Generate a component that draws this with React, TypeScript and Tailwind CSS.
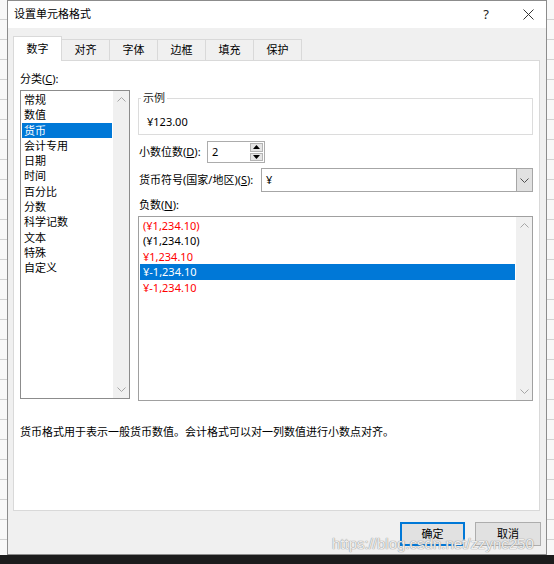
import React from "react";

const categories = ["常规", "数值", "货币", "会计专用", "日期", "时间", "百分比", "分数", "科学记数", "文本", "特殊", "自定义"];

const negatives = [
    { text: "(¥1,234.10)", red: true },
    { text: "(¥1,234.10)", red: false },
    { text: "¥1,234.10", red: true },
    { text: "¥-1,234.10", red: false, selected: true },
    { text: "¥-1,234.10", red: true },
];

const tabs = ["数字", "对齐", "字体", "边框", "填充", "保护"];

const Chevron = ({ dir, color = "#a6a6a6" }: { dir: "up" | "down"; color?: string }) => (
    <svg width="9" height="5" viewBox="0 0 9 5" fill="none">
        <path
            d={dir === "up" ? "M0.5 4.5 L4.5 0.5 L8.5 4.5" : "M0.5 0.5 L4.5 4.5 L8.5 0.5"}
            stroke={color}
            strokeWidth="1"
        />
    </svg>
);

const Triangle = ({ dir }: { dir: "up" | "down" }) => (
    <svg width="7" height="4" viewBox="0 0 7 4">
        <path d={dir === "up" ? "M0 4 L3.5 0 L7 4 Z" : "M0 0 L3.5 4 L7 0 Z"} fill="#000" />
    </svg>
);

const ScrollBar = () => (
    <div className="w-[16px] shrink-0 bg-[#f0f0f0] flex flex-col justify-between">
        <div className="h-[17px] flex items-center justify-center">
            <Chevron dir="up" />
        </div>
        <div className="h-[17px] flex items-center justify-center">
            <Chevron dir="down" />
        </div>
    </div>
);

const Key = ({ k }: { k: string }) => <span className="underline underline-offset-[1px]">{k}</span>;

// excel grid peeking out on both sides of the dialog
const Strip = () => (
    <div className="w-[7px] shrink-0 bg-[#f8f8f8] flex flex-col overflow-hidden">
        {Array.from({ length: 28 }).map((_, i) => (
            <div key={i} className="h-[20px] shrink-0 border-b border-[#d2d2d2]" />
        ))}
    </div>
);

const Dialog = () => {
    return (
        <div className="w-[540px] h-[555px] shrink-0 border border-[#8c8c8c] bg-[#f0f0f0] flex flex-col">
            {/* title bar */}
            <div className="h-[27px] bg-white flex items-center pl-[6px]">
                <div className="flex-1 text-[11px] text-black">设置单元格格式</div>
                <div className="w-[48px] text-center text-[13px] text-[#222]">?</div>
                <div className="w-[36px] flex justify-center">
                    <svg width="11" height="11" viewBox="0 0 11 11">
                        <path d="M0.5 0.5 L10.5 10.5 M10.5 0.5 L0.5 10.5" stroke="#333" strokeWidth="1" />
                    </svg>
                </div>
            </div>

            <div className="pt-[8px] pl-[5px] pr-[6px] flex flex-col">
                {/* tabs */}
                <div className="flex items-end h-[25px] -mb-px">
                    {tabs.map((t, i) =>
                        i === 0 ? (
                            <div
                                key={t}
                                className="relative z-10 w-[49px] h-[25px] bg-white border border-b-0 border-[#d9d9d9] flex items-center justify-center text-[11px]"
                            >
                                {t}
                            </div>
                        ) : (
                            <div
                                key={t}
                                className="w-[48px] h-[22px] bg-[#f0f0f0] border border-l-0 border-[#d9d9d9] flex items-center justify-center text-[11px]"
                            >
                                {t}
                            </div>
                        )
                    )}
                </div>

                {/* tab panel */}
                <div className="h-[451px] bg-white border border-[#d9d9d9] pt-[10px] pl-[6px] flex flex-col text-[11px] text-black">
                    <div className="flex">
                        <div className="w-[110px] flex flex-col">
                            <div className="leading-[16px] mb-[3px]">
                                分类(<Key k="C" />):
                            </div>
                            <div className="h-[309px] border border-[#8c8c8c] bg-white flex">
                                <div className="flex-1 p-[1px]">
                                    {categories.map((c) => (
                                        <div
                                            key={c}
                                            className={
                                                c === "货币"
                                                    ? "h-[15.3px] leading-[15.3px] pl-[2px] bg-[#0078d7] text-white"
                                                    : "h-[15.3px] leading-[15.3px] pl-[2px]"
                                            }
                                        >
                                            {c}
                                        </div>
                                    ))}
                                </div>
                                <ScrollBar />
                            </div>
                        </div>

                        <div className="w-[395px] ml-[8px] flex flex-col pt-[20px]">
                            <fieldset className="border border-[#dcdcdc] pl-[8px] pt-[9px] pb-[4px]">
                                <legend className="ml-[-6px] px-[2px] leading-[14px] text-[#222]">示例</legend>
                                <div className="leading-[16px]">¥123.00</div>
                            </fieldset>

                            <div className="flex items-center mt-[6px] h-[22px]">
                                <div className="w-[69px] pl-[1px]">
                                    小数位数(<Key k="D" />):
                                </div>
                                <div className="w-[58px] h-[22px] border border-[#acacac] bg-white flex">
                                    <div className="flex-1 pl-[4px] leading-[20px]">2</div>
                                    <div className="w-[15px] flex flex-col p-px gap-px">
                                        <div className="flex-1 bg-[#e5e5e5] border border-[#b4b4b4] flex items-center justify-center">
                                            <Triangle dir="up" />
                                        </div>
                                        <div className="flex-1 bg-[#e5e5e5] border border-[#b4b4b4] flex items-center justify-center">
                                            <Triangle dir="down" />
                                        </div>
                                    </div>
                                </div>
                            </div>

                            <div className="flex items-center mt-[5px] h-[24px]">
                                <div className="w-[123px] pl-[1px]">
                                    货币符号(国家/地区)(<Key k="S" />):
                                </div>
                                <div className="flex-1 h-[24px] border border-[#a6a6a6] bg-white flex">
                                    <div className="flex-1 pl-[4px] leading-[22px]">¥</div>
                                    <div className="w-[16px] bg-[#e1e1e1] border-l border-[#a6a6a6] flex items-center justify-center">
                                        <Chevron dir="down" color="#505050" />
                                    </div>
                                </div>
                            </div>

                            <div className="mt-[5px] leading-[16px] pl-[1px]">
                                负数(<Key k="N" />):
                            </div>

                            <div className="mt-[3px] h-[185px] border border-[#a0a0a0] bg-white flex">
                                <div className="flex-1 p-[1px]">
                                    {negatives.map((n, i) => (
                                        <div
                                            key={i}
                                            className={
                                                n.selected
                                                    ? "h-[15.4px] leading-[15.4px] pl-[3px] bg-[#0078d7] text-white"
                                                    : n.red
                                                      ? "h-[15.4px] leading-[15.4px] pl-[3px] text-[#ff0000]"
                                                      : "h-[15.4px] leading-[15.4px] pl-[3px]"
                                            }
                                        >
                                            {n.text}
                                        </div>
                                    ))}
                                </div>
                                <ScrollBar />
                            </div>
                        </div>
                    </div>

                    <div className="mt-[23px] leading-[16px]">
                        货币格式用于表示一般货币数值。会计格式可以对一列数值进行小数点对齐。
                    </div>
                </div>

                {/* buttons */}
                <div className="flex justify-end gap-[10px] mt-[11px] -mr-px">
                    <button className="w-[65px] h-[24px] border-2 border-[#0078d7] bg-[#e1e1e1] text-[11px] text-black">
                        确定
                    </button>
                    <button className="w-[66px] h-[24px] border border-[#adadad] bg-[#e1e1e1] text-[11px] text-black">
                        取消
                    </button>
                </div>
            </div>
        </div>
    );
};

export default function App() {
    return (
        <div className="w-[554px] h-[564px] relative overflow-hidden bg-[#1c1c1c] font-['Noto_Sans','Noto_Sans_CJK_SC',sans-serif]">
            <div className="flex h-[555px]">
                <Strip />
                <Dialog />
                <Strip />
            </div>
            {/* csdn watermark */}
            <div className="absolute left-[332px] top-[535px] text-[15px] leading-[18px] text-white/85 font-['Liberation_Sans',sans-serif] [text-shadow:0_0_1px_#8a8a8a,0_0_1px_#8a8a8a]">
                https://blog.csdn.net/zzync250
            </div>
        </div>
    );
}
